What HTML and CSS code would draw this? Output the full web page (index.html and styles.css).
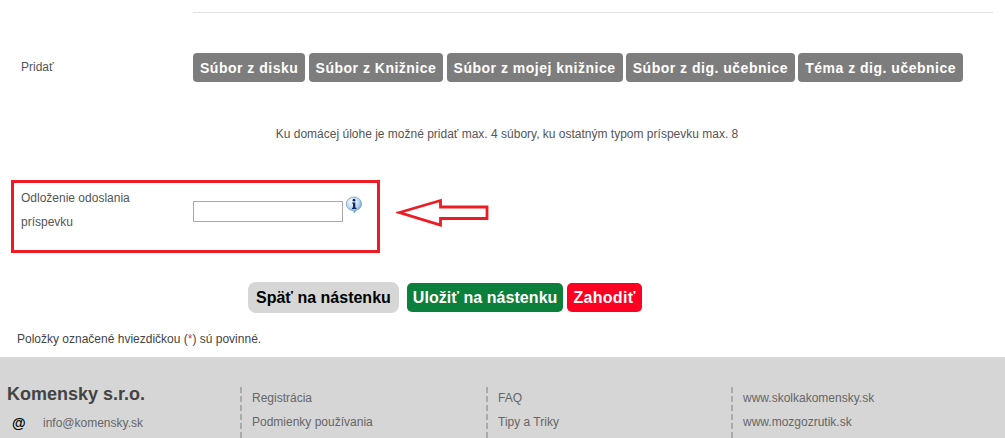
FILE: index.html
```html
<!DOCTYPE html>
<html lang="sk">
<head>
    <meta charset="UTF-8">
    <title>Komensky</title>
    <link rel="stylesheet" href="styles.css">
</head>
<body>
    <div class="content">
        <div class="divider"></div>

        <div class="add-row">
            <label class="add-label">Pridať</label>
            <div class="add-buttons">
                <button class="file-btn">Súbor z disku</button>
                <button class="file-btn">Súbor z Knižnice</button>
                <button class="file-btn">Súbor z mojej knižnice</button>
                <button class="file-btn">Súbor z dig. učebnice</button>
                <button class="file-btn">Téma z dig. učebnice</button>
            </div>
        </div>

        <p class="limit-note">Ku domácej úlohe je možné pridať max. 4 súbory, ku ostatným typom príspevku max. 8</p>

        <div class="delay-row">
            <div class="delay-box">
                <label class="delay-label">Odloženie odoslania príspevku</label>
                <input type="text" class="delay-input">
                <svg class="info-icon" width="18" height="18" viewBox="0 0 18 18">
                    <defs>
                        <radialGradient id="bubble" cx="0.4" cy="0.3" r="0.8">
                            <stop offset="0" stop-color="#ffffff"/>
                            <stop offset="0.55" stop-color="#bcd7f0"/>
                            <stop offset="1" stop-color="#4583bd"/>
                        </radialGradient>
                    </defs>
                    <path d="M9 1a7.5 6.8 0 0 1 2.2 13.3L9.3 16.8 8.7 14.7A7.5 6.8 0 0 1 9 1z" fill="url(#bubble)" stroke="#5f92c2" stroke-width="0.7"/>
                    <circle cx="9" cy="4.2" r="1.4" fill="#0c2a66"/>
                    <path d="M6.9 6.4h3.4v5.4h1.1v1.2H6.9v-1.2h1.1V7.6H6.9z" fill="#0c2a66"/>
                </svg>
            </div>
            <svg class="arrow" width="94" height="30" viewBox="0 0 94 30">
                <path d="M3.5 14.5L44.5 2.5V9H91V20.5H44.5V27z" fill="#fff" stroke="#ed1c24" stroke-width="2.8"/>
            </svg>
        </div>

        <div class="actions">
            <button class="action-btn back-btn">Späť na nástenku</button>
            <button class="action-btn save-btn">Uložiť na nástenku</button>
            <button class="action-btn drop-btn">Zahodiť</button>
        </div>

        <p class="required-note">Položky označené hviezdičkou (<span class="star">*</span>) sú povinné.</p>
    </div>

    <div class="footer">
        <div class="footer-company">
            <h3>Komensky s.r.o.</h3>
            <div class="footer-mail"><span class="at">@</span><a href="#">info@komensky.sk</a></div>
        </div>
        <div class="footer-col">
            <a href="#">Registrácia</a>
            <a href="#">Podmienky používania</a>
        </div>
        <div class="footer-col">
            <a href="#">FAQ</a>
            <a href="#">Tipy a Triky</a>
        </div>
        <div class="footer-col">
            <a href="#">www.skolkakomensky.sk</a>
            <a href="#">www.mozgozrutik.sk</a>
        </div>
    </div>
</body>
</html>
```

FILE: styles.css
```css
* {
    margin: 0;
    padding: 0;
    box-sizing: border-box;
}

html, body {
    height: 438px;
    overflow: hidden;
}

body {
    font-family: "Liberation Sans", Arial, sans-serif;
    font-size: 12px;
    color: #555;
    background: white;
}

.content {
    height: 357px;
    padding-top: 12px;
}

.divider {
    margin: 0 12px 0 193px;
    border-top: 1px solid #e2e2e2;
}

.add-row {
    display: flex;
    margin-top: 40px;
}

.add-label {
    width: 193px;
    padding: 7px 0 0 21px;
    line-height: 14px;
}

.add-buttons {
    display: flex;
    gap: 3.25px;
}

.file-btn {
    height: 29px;
    padding: 0 7px;
    border: none;
    border-radius: 4px;
    background: #7d7d7d;
    color: white;
    font-family: "Liberation Sans", Arial, sans-serif;
    font-size: 14px;
    font-weight: bold;
    letter-spacing: 0.5px;
}

.limit-note {
    margin-top: 45px;
    padding-left: 9px;
    line-height: 14px;
    text-align: center;
}

.delay-row {
    display: flex;
    align-items: center;
    margin: 39px 0 0 11px;
}

.delay-box {
    display: flex;
    align-items: flex-start;
    width: 369px;
    height: 73px;
    border: 3px solid #ed1c24;
}

.delay-label {
    width: 179px;
    padding: 3px 50px 0 7px;
    line-height: 24px;
}

.delay-input {
    width: 150px;
    height: 21px;
    margin-top: 18px;
    border: 1px solid #a9a9a9;
}

.info-icon {
    margin: 13px 0 0 2px;
}

.arrow {
    margin: -7px 0 0 16px;
}

.actions {
    display: flex;
    align-items: center;
    margin-top: 29px;
    padding-left: 248px;
}

.action-btn {
    height: 29px;
    padding: 0 6px;
    border: none;
    border-radius: 5px;
    font-family: "Liberation Sans", Arial, sans-serif;
    font-size: 16px;
    font-weight: bold;
}

.back-btn {
    height: 31px;
    padding: 0 8px;
    margin-right: 8px;
    border-radius: 8px;
    background: #d6d6d6;
    color: black;
}

.save-btn {
    margin-right: 4px;
    background: #0a803c;
    color: white;
    letter-spacing: 0.05px;
}

.drop-btn {
    background: #ff0022;
    color: white;
    letter-spacing: 0.3px;
}

.required-note {
    margin: 19px 0 0 17px;
    line-height: 14px;
    color: #444;
}

.star {
    color: #d0413a;
}

.footer {
    height: 81px;
    background: #d6d6d6;
    display: grid;
    grid-template-columns: 240px 246px 245px 1fr;
}

.footer a {
    color: #666;
    text-decoration: none;
}

.footer-company {
    padding: 26px 0 0 7px;
}

.footer-company h3 {
    font-size: 18px;
    line-height: 22px;
    color: #444;
}

.footer-mail {
    display: flex;
    align-items: center;
    margin-top: 11px;
    line-height: 14px;
}

.at {
    width: 36px;
    padding-left: 5px;
    color: black;
    font-size: 14px;
    font-weight: bold;
}

.footer-col {
    display: flex;
    flex-direction: column;
    gap: 9.5px;
    margin-top: 30px;
    padding: 4px 0 0 10px;
    border-left: 2px dashed #aaa;
    line-height: 14px;
}
```
